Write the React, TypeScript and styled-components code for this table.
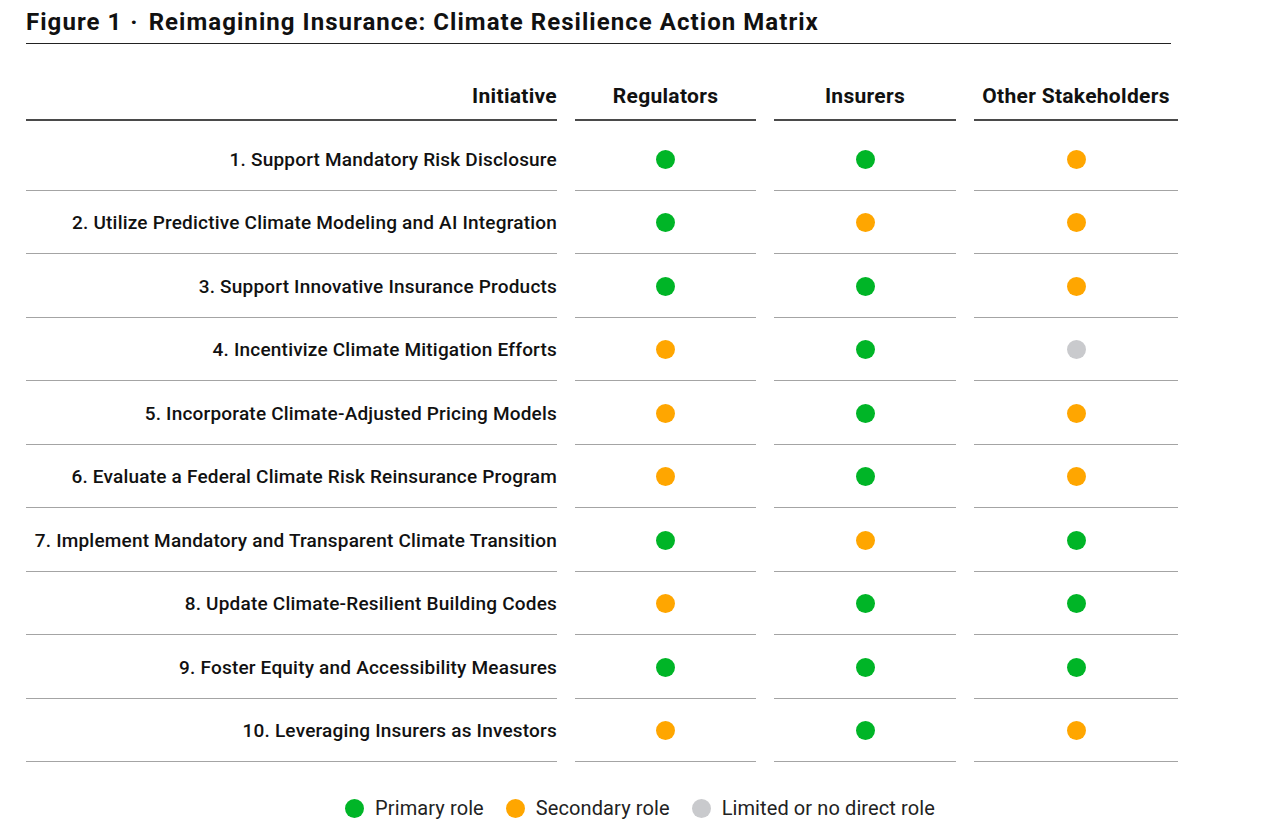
import React from "react";
import styled, { createGlobalStyle } from "styled-components";

const GlobalStyle = createGlobalStyle`
  html, body {
    margin: 0;
    padding: 0;
    background: #ffffff;
  }
  body {
    font-family: Roboto, "Noto Sans", "Liberation Sans", sans-serif;
    color: #111111;
  }
`;

type Role = "primary" | "secondary" | "none";

const roleColors: Record<Role, string> = {
  primary: "#00b527",
  secondary: "#ffa600",
  none: "#c9cacd",
};

const COLUMNS = "531px 181px 182px 204px";

// Layout
const Page = styled.div`
  width: 1280px;
  height: 834px;
  padding: 0 0 0 26px;
  box-sizing: border-box;
  overflow: hidden;
`;

const TitleBar = styled.h1`
  width: 1145px;
  margin: 0;
  padding: 8px 0 7px;
  font-size: 24px;
  font-weight: 700;
  line-height: 28px;
  color: #111;
  border-bottom: 1.5px solid #222;
  letter-spacing: 1.05px;
`;

const Separator = styled.span`
  display: inline-block;
  margin: 0 10px 0 8px;
`;

const Grid = styled.div<{ $top?: number }>`
  display: grid;
  grid-template-columns: ${COLUMNS};
  column-gap: 18px;
  width: 1153px;
  margin-top: ${(p) => p.$top ?? 0}px;
`;

const HeadCell = styled.div<{ $align?: "right" | "center" }>`
  height: 50px;
  box-sizing: border-box;
  display: flex;
  align-items: center;
  justify-content: ${(p) => (p.$align === "right" ? "flex-end" : "center")};
  padding-top: 2px;
  font-size: 21px;
  font-weight: 700;
  letter-spacing: 0.3px;
  color: #111;
  border-bottom: 2px solid #4a4a4a;
`;

const Cell = styled.div<{ $align?: "right" | "center" }>`
  height: 63.5px;
  box-sizing: border-box;
  display: flex;
  align-items: center;
  justify-content: ${(p) => (p.$align === "right" ? "flex-end" : "center")};
  padding-top: 2px;
  font-size: 19px;
  font-weight: 500;
  letter-spacing: 0.2px;
  color: #111;
  border-bottom: 1.5px solid #a4a4a4;
`;

const Dot = styled.span<{ $role: Role; $size?: number }>`
  display: inline-block;
  flex: none;
  width: ${(p) => p.$size ?? 19}px;
  height: ${(p) => p.$size ?? 19}px;
  border-radius: 50%;
  background: ${(p) => roleColors[p.$role]};
`;

const Legend = styled.div`
  width: 1228px;
  display: flex;
  justify-content: center;
  align-items: center;
  gap: 22px;
  margin-top: 34px;
`;

const LegendItem = styled.div`
  display: flex;
  align-items: center;
  gap: 11px;
  font-size: 20px;
  font-weight: 400;
  letter-spacing: 0.1px;
  color: #222;
`;

const rows: { label: string; roles: [Role, Role, Role] }[] = [
  { label: "1. Support Mandatory Risk Disclosure", roles: ["primary", "primary", "secondary"] },
  { label: "2. Utilize Predictive Climate Modeling and AI Integration", roles: ["primary", "secondary", "secondary"] },
  { label: "3. Support Innovative Insurance Products", roles: ["primary", "primary", "secondary"] },
  { label: "4. Incentivize Climate Mitigation Efforts", roles: ["secondary", "primary", "none"] },
  { label: "5. Incorporate Climate-Adjusted Pricing Models", roles: ["secondary", "primary", "secondary"] },
  { label: "6. Evaluate a Federal Climate Risk Reinsurance Program", roles: ["secondary", "primary", "secondary"] },
  { label: "7. Implement Mandatory and Transparent Climate Transition", roles: ["primary", "secondary", "primary"] },
  { label: "8. Update Climate-Resilient Building Codes", roles: ["secondary", "primary", "primary"] },
  { label: "9. Foster Equity and Accessibility Measures", roles: ["primary", "primary", "primary"] },
  { label: "10. Leveraging Insurers as Investors", roles: ["secondary", "primary", "secondary"] },
];

const App = () => {
  return (
    <Page>
      <GlobalStyle />
      <TitleBar>
        Figure 1<Separator>·</Separator>Reimagining Insurance: Climate Resilience Action Matrix
      </TitleBar>

      <Grid $top={27}>
        <HeadCell $align="right">Initiative</HeadCell>
        <HeadCell>Regulators</HeadCell>
        <HeadCell>Insurers</HeadCell>
        <HeadCell>Other Stakeholders</HeadCell>
      </Grid>

      <Grid $top={6}>
        {rows.map((row) => (
          <React.Fragment key={row.label}>
            <Cell $align="right">{row.label}</Cell>
            {row.roles.map((role, i) => (
              <Cell key={i}>
                <Dot $role={role} />
              </Cell>
            ))}
          </React.Fragment>
        ))}
      </Grid>

      <Legend>
        <LegendItem>
          <Dot $role="primary" />
          Primary role
        </LegendItem>
        <LegendItem>
          <Dot $role="secondary" />
          Secondary role
        </LegendItem>
        <LegendItem>
          <Dot $role="none" />
          Limited or no direct role
        </LegendItem>
      </Legend>
    </Page>
  );
};

export default App;
